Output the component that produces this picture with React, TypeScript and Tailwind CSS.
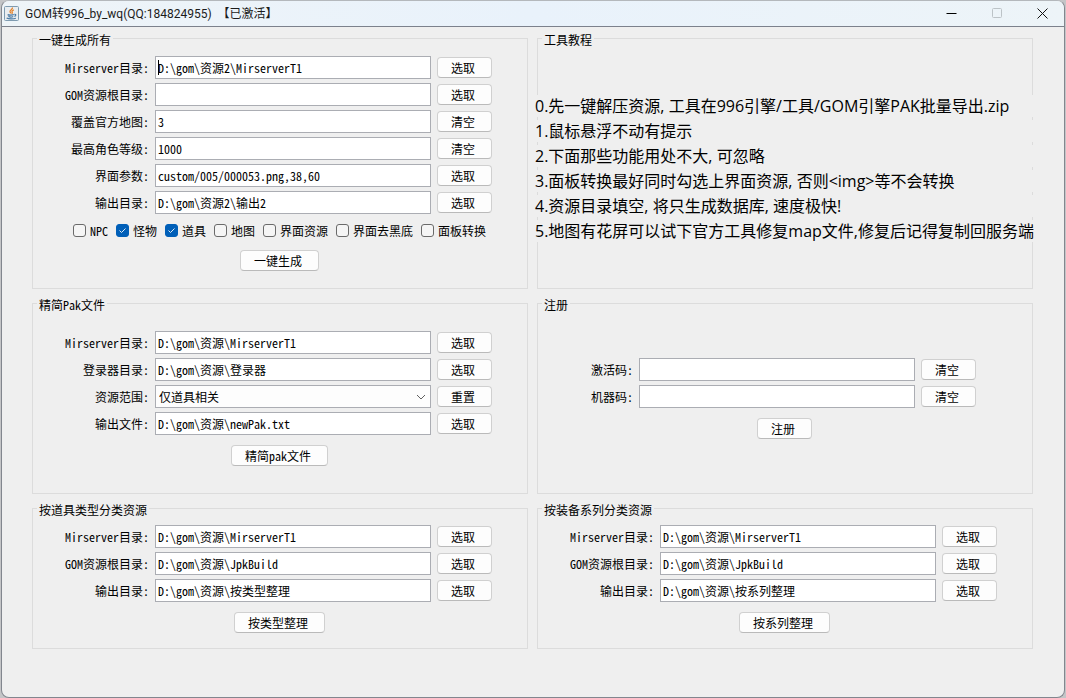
import { useState } from 'react'
import type { ReactNode } from 'react'

type Campo = {
  id: string
  label: string
  valor: string
  acao: string
  opcoes?: string[]
  cursor?: boolean
}

const camposGerar: Campo[] = [
  { id: 'gen-mir', label: 'Mirserver目录:', valor: 'D:\\gom\\资源2\\MirserverT1', acao: '选取', cursor: true },
  { id: 'gen-gom', label: 'GOM资源根目录:', valor: '', acao: '选取' },
  { id: 'gen-map', label: '覆盖官方地图:', valor: '3', acao: '清空' },
  { id: 'gen-level', label: '最高角色等级:', valor: '1000', acao: '清空' },
  { id: 'gen-ui', label: '界面参数:', valor: 'custom/005/000053.png,38,60', acao: '选取' },
  { id: 'gen-out', label: '输出目录:', valor: 'D:\\gom\\资源2\\输出2', acao: '选取' },
]

const camposPak: Campo[] = [
  { id: 'pak-mir', label: 'Mirserver目录:', valor: 'D:\\gom\\资源\\MirserverT1', acao: '选取' },
  { id: 'pak-login', label: '登录器目录:', valor: 'D:\\gom\\资源\\登录器', acao: '选取' },
  { id: 'pak-range', label: '资源范围:', valor: '仅道具相关', acao: '重置', opcoes: ['仅道具相关'] },
  { id: 'pak-out', label: '输出文件:', valor: 'D:\\gom\\资源\\newPak.txt', acao: '选取' },
]

const camposRegistro: Campo[] = [
  { id: 'reg-code', label: '激活码:', valor: '', acao: '清空' },
  { id: 'reg-machine', label: '机器码:', valor: '', acao: '清空' },
]

const camposTipo: Campo[] = [
  { id: 'type-mir', label: 'Mirserver目录:', valor: 'D:\\gom\\资源\\MirserverT1', acao: '选取' },
  { id: 'type-gom', label: 'GOM资源根目录:', valor: 'D:\\gom\\资源\\JpkBuild', acao: '选取' },
  { id: 'type-out', label: '输出目录:', valor: 'D:\\gom\\资源\\按类型整理', acao: '选取' },
]

const camposSerie: Campo[] = [
  { id: 'set-mir', label: 'Mirserver目录:', valor: 'D:\\gom\\资源\\MirserverT1', acao: '选取' },
  { id: 'set-gom', label: 'GOM资源根目录:', valor: 'D:\\gom\\资源\\JpkBuild', acao: '选取' },
  { id: 'set-out', label: '输出目录:', valor: 'D:\\gom\\资源\\按系列整理', acao: '选取' },
]

const opcoesGerar = [
  { nome: 'NPC', marcado: false },
  { nome: '怪物', marcado: true },
  { nome: '道具', marcado: true },
  { nome: '地图', marcado: false },
  { nome: '界面资源', marcado: false },
  { nome: '界面去黑底', marcado: false },
  { nome: '面板转换', marcado: false },
]

const tutorial = [
  '0.先一键解压资源, 工具在996引擎/工具/GOM引擎PAK批量导出.zip',
  '1.鼠标悬浮不动有提示',
  '2.下面那些功能用处不大, 可忽略',
  '3.面板转换最好同时勾选上界面资源, 否则<img>等不会转换',
  '4.资源目录填空, 将只生成数据库, 速度极快!',
  '5.地图有花屏可以试下官方工具修复map文件,修复后记得复制回服务端',
]

function Botao({ children }: { children: ReactNode }) {
  return (
    <button
      type="button"
      className="h-[21px] shrink-0 whitespace-nowrap rounded border border-[#d0d0d0] border-b-[#bababa] bg-[#fdfdfd] pl-[13px] pr-4 leading-5 hover:bg-[#f5f5f5]"
    >
      {children}
    </button>
  )
}

function Acao({ children }: { children: ReactNode }) {
  return (
    <div className="flex justify-center pr-px">
      <Botao>{children}</Botao>
    </div>
  )
}

function Grupo({ titulo, className, children }: { titulo: string; className: string; children: ReactNode }) {
  return (
    <fieldset className={`min-w-0 border border-[#dcdcdc] ${className}`}>
      <legend className="ml-1 h-4 px-[2px] leading-5">{titulo}</legend>
      {children}
    </fieldset>
  )
}

function LinhaCampo({ campo }: { campo: Campo }) {
  const [valor, setValor] = useState(campo.valor)

  return (
    <div className="contents">
      <label htmlFor={campo.id} className="whitespace-nowrap text-right">
        {campo.label}
      </label>
      <div className="relative">
        {campo.opcoes ? (
          <>
            <select
              id={campo.id}
              value={valor}
              onChange={(e) => setValor(e.target.value)}
              className="block h-[23px] w-full appearance-none border border-[#abadb3] bg-[#fdfdfd] px-[3px] outline-none"
            >
              {campo.opcoes.map((o) => (
                <option key={o}>{o}</option>
              ))}
            </select>
            <svg viewBox="0 0 10 6" className="pointer-events-none absolute right-[5px] top-[9px] h-[6px] w-[10px]" fill="none" stroke="#606060">
              <path d="M1 1 L5 5 L9 1" />
            </svg>
          </>
        ) : (
          <input
            id={campo.id}
            type="text"
            value={valor}
            onChange={(e) => setValor(e.target.value)}
            className="block h-[23px] w-full border border-[#abadb3] bg-white px-[2px] outline-none"
          />
        )}
        {campo.cursor && <span className="absolute left-[3px] top-1 h-[15px] w-px bg-black" />}
      </div>
      <Botao>{campo.acao}</Botao>
    </div>
  )
}

function Campos({ campos }: { campos: Campo[] }) {
  return (
    <div className="mb-[10px] grid grid-cols-[auto_276px_auto] items-center justify-center gap-x-[6px] gap-y-1 pr-[3px]">
      {campos.map((c) => (
        <LinhaCampo key={c.id} campo={c} />
      ))}
    </div>
  )
}

function Opcao({ nome, marcado }: { nome: string; marcado: boolean }) {
  return (
    <label className="flex items-center gap-1 whitespace-nowrap">
      <span className="relative block h-[13px] w-[13px]">
        <input
          type="checkbox"
          defaultChecked={marcado}
          className="peer block h-[13px] w-[13px] appearance-none rounded-[3px] border border-[#6a6a6a] bg-[#f5f5f5] checked:border-[#005fb8] checked:bg-[#005fb8]"
        />
        <svg viewBox="0 0 13 13" className="pointer-events-none absolute inset-0 hidden h-[13px] w-[13px] peer-checked:block" fill="none" stroke="#dcebf8">
          <path d="M3.5 6.5 L5.5 8.5 L9.5 4.5" />
        </svg>
      </span>
      {nome}
    </label>
  )
}

function IconeJava() {
  return (
    <svg viewBox="0 0 15 15" className="h-[15px] w-[15px] shrink-0" fill="none">
      <rect x="0.5" y="0.5" width="14" height="14" rx="1" fill="#e9edf0" stroke="#7f9bb0" />
      <path d="M8.4 1.6 C9.2 3.4 5.4 4.2 6 5.8 C6.2 6.5 7 6.8 7 7.6 M9.8 3.8 C8 4.6 7.6 5.4 8.2 6.2 C8.6 6.8 8.2 7.3 7.8 7.7" stroke="#e5852f" strokeWidth="1.3" />
      <path d="M3.6 8.6 C5 9.3 8.6 9.3 9.8 8.6 M4.4 10.4 C5.6 11 8.2 11 9.2 10.4 M10.4 8.4 C12.4 8 12.2 9.9 10.4 10.4 M2.6 12 C4.4 13.1 9.8 13.1 11.8 12.2" stroke="#4a7ba6" strokeWidth="1.2" />
    </svg>
  )
}

function BarraTitulo() {
  return (
    <header className="box-content flex h-[25px] items-center border-b border-[#7c818c] bg-gradient-to-r from-[#eef4f8] via-[#e9f2fb] to-[#edf4f8] pl-[2px]">
      <IconeJava />
      <h1 className="ml-[6px] flex-1 whitespace-pre font-['Roboto','Noto_Sans_CJK_SC',sans-serif] text-xs text-[#1b1b1b]">
        GOM转996_by_wq(QQ:184824955)  【已激活】
      </h1>
      <button type="button" aria-label="最小化" className="flex h-full w-[46px] items-center justify-center">
        <svg viewBox="0 0 11 11" className="h-[11px] w-[11px]" stroke="#000">
          <path d="M0.5 5.5 H10.5" />
        </svg>
      </button>
      <button type="button" aria-label="最大化" disabled className="flex h-full w-[46px] items-center justify-center">
        <svg viewBox="0 0 11 11" className="h-[11px] w-[11px]" fill="none" stroke="#bcc3c7">
          <rect x="0.5" y="0.5" width="9" height="9" rx="1" />
        </svg>
      </button>
      <button type="button" aria-label="关闭" className="flex h-full w-11 items-center justify-center">
        <svg viewBox="0 0 11 11" className="h-[11px] w-[11px]" stroke="#111">
          <path d="M0.5 0.5 L10.5 10.5 M10.5 0.5 L0.5 10.5" />
        </svg>
      </button>
    </header>
  )
}

export default function App() {
  return (
    <div className="flex min-h-screen bg-[#c4c5c7] px-px pb-px font-['Noto_Sans_Mono_CJK_SC','Noto_Sans_CJK_SC',monospace] text-xs text-black">
      <div className="flex flex-1 flex-col overflow-hidden rounded-lg border border-[#82868e] border-t-[#b4b8bc] bg-[#efefef]">
        <BarraTitulo />

        <main className="grid grid-cols-2 gap-x-[9px] gap-y-[6px] pb-12 pl-[30px] pr-[31px] pt-[3px]">
          <Grupo titulo="一键生成所有" className="pb-[17px] pt-[10px]">
            <Campos campos={camposGerar} />
            <div className="mb-[13px] flex h-[13px] items-center justify-center gap-2 pr-px">
              {opcoesGerar.map((o) => (
                <Opcao key={o.nome} nome={o.nome} marcado={o.marcado} />
              ))}
            </div>
            <Acao>一键生成</Acao>
          </Grupo>

          <Grupo titulo="工具教程" className="pt-[49px]">
            {/* as linhas de texto passam por cima da borda do grupo */}
            <ul className="-ml-[3px] -mr-[2px] space-y-[3px] font-['Open_Sans','Noto_Sans_CJK_SC',sans-serif] text-base">
              {tutorial.map((linha) => (
                <li key={linha} className="relative h-[22px] whitespace-nowrap bg-[#efefef] leading-[22px]">
                  {linha}
                </li>
              ))}
            </ul>
          </Grupo>

          <Grupo titulo="精简Pak文件" className="pb-[27px] pt-5">
            <Campos campos={camposPak} />
            <Acao>精简pak文件</Acao>
          </Grupo>

          <Grupo titulo="注册" className="pt-[47px]">
            <Campos campos={camposRegistro} />
            <Acao>注册</Acao>
          </Grupo>

          <Grupo titulo="按道具类型分类资源" className="pb-[15px] pt-[9px]">
            <Campos campos={camposTipo} />
            <Acao>按类型整理</Acao>
          </Grupo>

          <Grupo titulo="按装备系列分类资源" className="pb-[15px] pt-[9px]">
            <Campos campos={camposSerie} />
            <Acao>按系列整理</Acao>
          </Grupo>
        </main>
      </div>
    </div>
  )
}
